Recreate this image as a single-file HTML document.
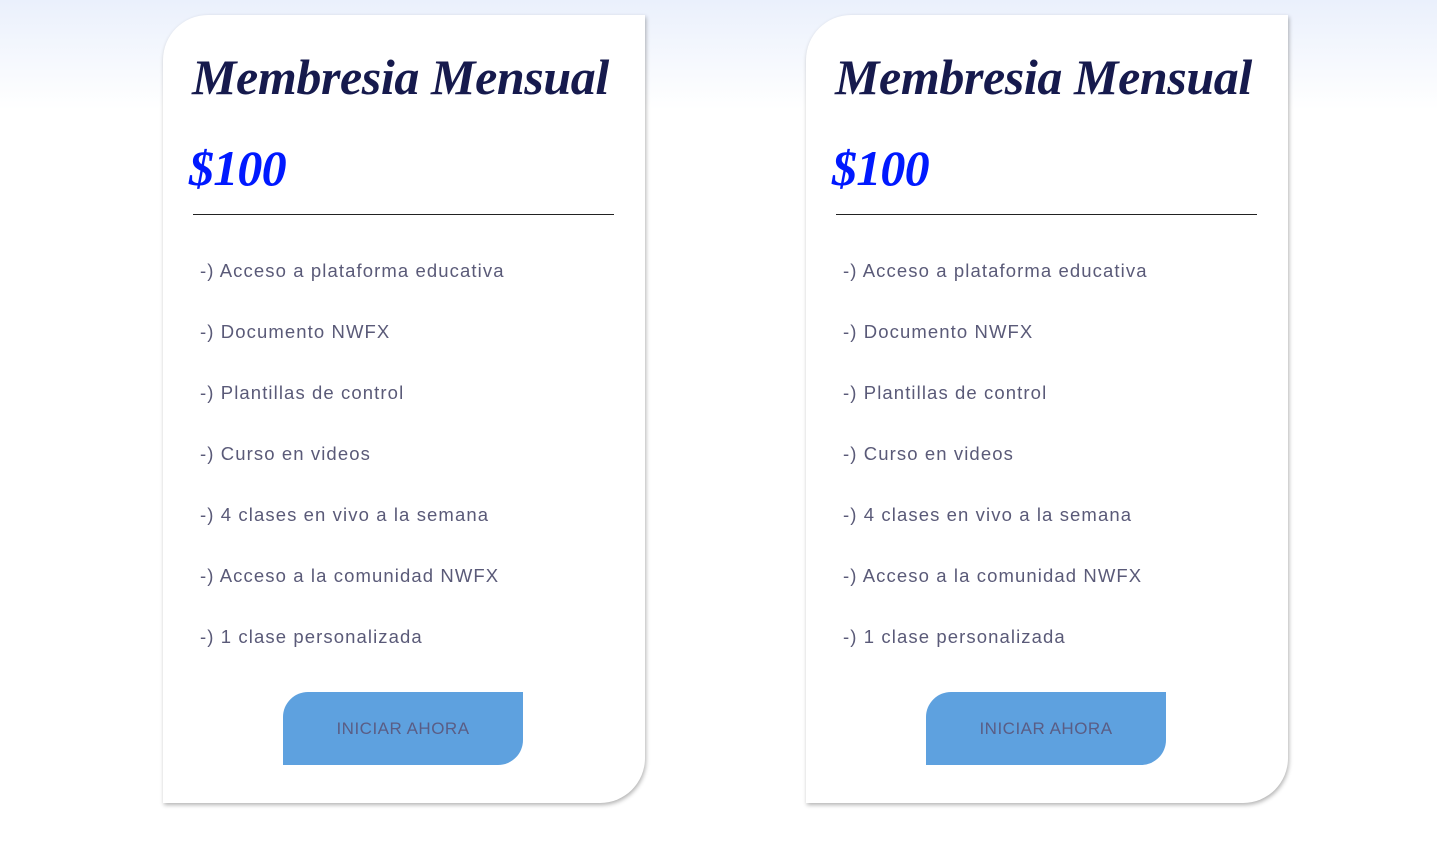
<!DOCTYPE html>
<html><head><meta charset="utf-8"><style>
body{margin:0;width:1437px;height:865px;background:linear-gradient(#eaf0fc 0,#fff 110px);font-family:"Liberation Sans",sans-serif;position:relative;overflow:hidden}
.card{position:absolute;top:15px;width:482px;height:788px;background:#fff;border-radius:45px 0 45px 0;box-shadow:1px 2px 4px rgba(0,0,0,.3)}
.t{position:absolute;left:29px;top:33px;font-family:"Liberation Serif",serif;font-style:italic;font-weight:bold;font-size:50px;color:#161a4d;letter-spacing:-0.4px;white-space:nowrap}
.p{position:absolute;left:26px;top:124px;font-family:"Liberation Serif",serif;font-style:italic;font-weight:bold;font-size:50px;color:#0019ff;letter-spacing:-0.8px}
.hr{position:absolute;left:30px;top:199px;width:421px;height:1px;background:#222}
.li{position:absolute;left:37px;font-size:18.5px;letter-spacing:1.1px;color:#5a5a78;white-space:nowrap}
.btn{position:absolute;left:120px;top:677px;width:240px;height:73px;background:#5ea1df;border-radius:25px 0 25px 0;color:#5a5d85;font-size:17px;letter-spacing:0.5px;text-align:center;line-height:73px}
</style></head><body>
<div class="card" style="left:163px">
<div class="t">Membresia Mensual</div><div class="p">$100</div><div class="hr"></div>
<div class="li" style="top:245px">-) Acceso a plataforma educativa</div>
<div class="li" style="top:306px">-) Documento NWFX</div>
<div class="li" style="top:367px">-) Plantillas de control</div>
<div class="li" style="top:428px">-) Curso en videos</div>
<div class="li" style="top:489px">-) 4 clases en vivo a la semana</div>
<div class="li" style="top:550px">-) Acceso a la comunidad NWFX</div>
<div class="li" style="top:611px">-) 1 clase personalizada</div>
<div class="btn">INICIAR AHORA</div>
</div>
<div class="card" style="left:806px">
<div class="t">Membresia Mensual</div><div class="p">$100</div><div class="hr"></div>
<div class="li" style="top:245px">-) Acceso a plataforma educativa</div>
<div class="li" style="top:306px">-) Documento NWFX</div>
<div class="li" style="top:367px">-) Plantillas de control</div>
<div class="li" style="top:428px">-) Curso en videos</div>
<div class="li" style="top:489px">-) 4 clases en vivo a la semana</div>
<div class="li" style="top:550px">-) Acceso a la comunidad NWFX</div>
<div class="li" style="top:611px">-) 1 clase personalizada</div>
<div class="btn">INICIAR AHORA</div>
</div>
</body></html>
